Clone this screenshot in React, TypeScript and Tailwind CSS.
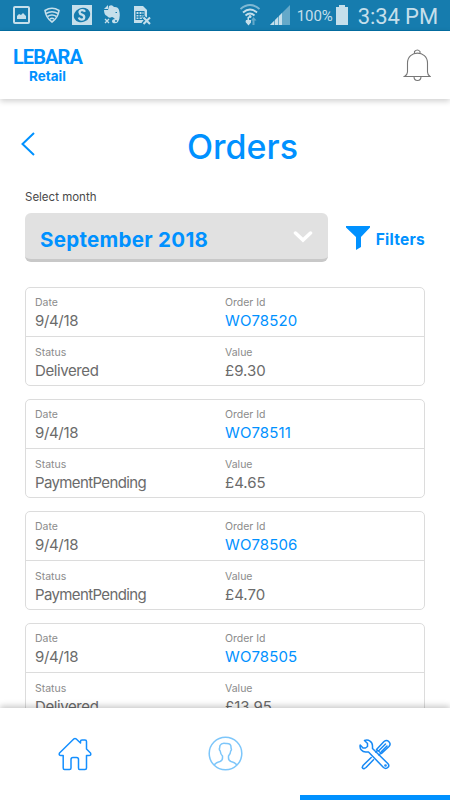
import React from 'react';
import clsx from 'clsx';

interface Order {
  id: string;
  date: string;
  status: string;
  value: string;
}

const orders: Order[] = [
  { id: 'WO78520', date: '9/4/18', status: 'Delivered', value: '£9.30' },
  { id: 'WO78511', date: '9/4/18', status: 'PaymentPending', value: '£4.65' },
  { id: 'WO78506', date: '9/4/18', status: 'PaymentPending', value: '£4.70' },
  { id: 'WO78505', date: '9/4/18', status: 'Delivered', value: '£13.95' },
];

const StatusBar: React.FC = () => (
  <div className="flex h-[31px] shrink-0 items-center border-b border-[#0470a5] bg-[#167cae] pl-[13px] pr-3 font-[Roboto,sans-serif] text-[#c5dfeb]">
    <svg className="h-[18px] w-[17px]" viewBox="0 0 17 18" fill="none">
      <rect x="1" y="1" width="15" height="16" rx="1" stroke="currentColor" strokeWidth="2" />
      <path d="M4 13v-3l2-2 2 1 2-2 3 3v3z" fill="currentColor" />
    </svg>
    <svg className="ml-[14px] h-4 w-4" viewBox="0 0 16 16" fill="none" stroke="currentColor" strokeWidth="1.6">
      <path d="M1 3.5Q8-1 15 3.5Q14 11 8 15Q2 11 1 3.5z" />
      <path d="M2 6.5Q8 3 14 6.5M3.5 9.5Q8 6.5 12.5 9.5M6 12Q8 10.5 10 12" />
    </svg>
    <svg className="ml-3 h-5 w-5" viewBox="0 0 20 20">
      <path d="M0 0h20v20H0z" fill="currentColor" />
      <ellipse cx="10" cy="10" rx="8.4" ry="7" fill="#167cae" transform="rotate(-25 10 10)" />
      <path d="M13 6.8Q12 4.8 9.8 5.2C6.5 5.8 7 8.8 10 9.7C13.4 10.8 12.5 14.5 9.8 14.6Q7.5 14.7 6.8 12.5" fill="none" stroke="currentColor" strokeWidth="2.3" />
    </svg>
    <svg className="ml-3 h-5 w-4" viewBox="0 0 16 20">
      <path d="M5 1Q8-1 10 2Q14 1.5 15 5Q17 12 14 17Q12 19 9 18Q7 16 9 14.5L11 14Q9 12 8 12Q5 14 3 11Q0 10 0 5L4 5z" fill="currentColor" />
      <path d="M0 4l4-4v4z" fill="currentColor" />
      <path d="M11 16h2" stroke="#167cae" strokeWidth="1.3" />
      <path d="M11.5 7.5h1.5" stroke="#167cae" />
      <path d="M1 14l4 4M5 14l-4 4" stroke="currentColor" strokeWidth="1.3" />
    </svg>
    <svg className="ml-[13px] h-5 w-[19px]" viewBox="0 0 19 20" fill="none">
      <path d="M1 1h9l4 4v7l-3 6H1z" fill="currentColor" />
      <path d="M3 6.5h8v8H3zM3 9.5h8M3 12h6M6 6v8M9 6v6" stroke="#167cae" strokeWidth="1.1" />
      <path d="M10 12l7 7M17 12l-7 7" stroke="#167cae" strokeWidth="4" />
      <path d="M10.5 12.5l6.5 6.5M17 12.5l-6.5 6.5" stroke="currentColor" strokeWidth="2.1" />
    </svg>
    <svg className="ml-auto mr-[10px] h-[22px] w-5" viewBox="0 0 20 22" fill="none">
      <path d="M.5 5Q10-3 19.5 5" stroke="currentColor" strokeOpacity=".6" strokeWidth="1.9" />
      <path d="M3 8.5Q10 2.5 17 8.5M5.5 11.5Q10 7.5 14.5 11.5" stroke="currentColor" strokeWidth="1.9" />
      <circle cx="10" cy="12.5" r="1.5" fill="currentColor" />
      <path d="M6 16h1.5v-3H9v3h2v2.5l-2.5 3L5.5 18z" fill="currentColor" />
      <path d="M13.5 13l3 3.5h-2V21h-2v-4.5H11z" fill="currentColor" fillOpacity=".45" />
    </svg>
    <svg className="mr-[7px] h-5 w-5" viewBox="0 0 20 20">
      <path d="M0 20L20 0v20z" fill="currentColor" fillOpacity=".45" />
      <path d="M0 20l4-4v4zM5 15l3-3v8H5zM9 11l3-3v12H9z" fill="currentColor" />
    </svg>
    <span className="w-[36px] whitespace-nowrap pt-[2px] text-[15px] tracking-[-0.1px]">100%</span>
    <svg className="ml-[3px] mr-[10px] h-5 w-3" viewBox="0 0 12 20" fill="currentColor">
      <path d="M3 0h6v2h3v18H0V2h3z" />
    </svg>
    <span className="whitespace-nowrap pt-[3px] text-[22px] leading-[28px] tracking-[-0.1px]">3:34 PM</span>
  </div>
);

const Header: React.FC = () => (
  <header className="relative z-10 flex h-[68px] shrink-0 justify-between bg-white pl-[12px] pr-[19px] shadow-[0_2px_6px_rgba(0,0,0,0.2)]">
    <div className="flex w-[71px] flex-col items-center pt-[16px] text-[#0091ff]">
      <span className="font-[Roboto,sans-serif] text-[20px] font-bold leading-[20px] tracking-[-0.9px]">LEBARA</span>
      <span className="mt-[1px] text-[13.5px] font-bold leading-[16px]">Retail</span>
    </div>
    <svg className="mt-[18px] h-[33px] w-[28px]" viewBox="0 0 28 33" fill="none" stroke="#777" strokeWidth="1.1">
      <path d="M4.500 23V14C4.500 .8 24.500 .8 24.500 14V23Q24.500 25.500 27 27.500H1.500Q4.500 25.500 4.500 23z" />
      <path d="M11.500 4.500V2.500Q14.500-.5 17 2.500V4.500M11 27.500Q11 31.500 14.500 31.500T18 27.500" />
    </svg>
  </header>
);

interface FieldProps {
  label: string;
  value: string;
  className: string;
}

const Field: React.FC<FieldProps> = ({ label, value, className }) => (
  <div>
    <div className="text-[10.5px] leading-[14px] text-[#8b8b8b]">{label}</div>
    <div className={clsx('mt-[1px] text-[15px] leading-5', className)}>{value}</div>
  </div>
);

const OrderCard: React.FC<{ order: Order }> = ({ order }) => (
  <div className="h-[99px] shrink-0 rounded-[5px] border border-[#dcdcdc] bg-white">
    <div className="grid h-[49px] grid-cols-[190px_1fr] border-b border-[#dcdcdc] px-[9px] pt-[8px]">
      <Field label="Date" value={order.date} className="tracking-[-0.35px] text-[#6b6b6b]" />
      <Field label="Order Id" value={order.id} className="tracking-[0.1px] text-[#0091ff]" />
    </div>
    <div className="grid grid-cols-[190px_1fr] px-[9px] pt-[9px]">
      <Field
        label="Status"
        value={order.status}
        className={clsx('text-[#6b6b6b]', order.status === 'Delivered' ? 'tracking-[-0.4px]' : 'tracking-[-0.63px]')}
      />
      <Field label="Value" value={order.value} className="text-[#6b6b6b]" />
    </div>
  </div>
);

const BottomNav: React.FC = () => (
  <nav className="relative z-10 grid h-[92px] shrink-0 grid-cols-3 bg-white shadow-[0_-2px_6px_rgba(0,0,0,0.22)]">
    <div className="flex justify-center pt-[29px]">
      <svg className="h-[34px] w-[34px]" viewBox="0 0 34 34" fill="none" stroke="#148fff" strokeWidth="1.5" strokeLinejoin="round">
        <path d="M1.500 16L16 1.800Q17 1 18 1.800L22.500 6V4.500Q22.500 3 24 3H27Q28.500 3 28.500 4.500V12L32.500 16Q33.500 18.500 31 18.500H28.500V31Q28.500 32.500 27 32.500H21.500Q20.500 32.500 20.500 31V22.500Q20.500 20.500 18.500 20.500H15Q13 20.500 13 22.500V31Q13 32.500 11.500 32.500H6.500Q5.200 32.500 5.200 31V18.500H3Q.5 18.500 1.500 16z" />
      </svg>
    </div>
    <div className="flex justify-center pt-[28px]">
      <svg className="h-[35px] w-[35px]" viewBox="0 0 35 35" fill="none" stroke="#7dc6fa" strokeWidth="1.5">
        <circle cx="17.5" cy="17.5" r="16.3" />
        <path d="M6 29Q8 26.500 12 25.500Q14.500 24.500 14.500 22V20Q12.500 18 12.200 15Q11 14 11.500 12.500L12 9.500Q13.500 6.500 18 7.500Q23.500 7 23 12Q24 14 22.700 15Q22.500 18 20.500 20V22Q20.500 24.500 23 25.500Q27 26.500 29 29" />
      </svg>
    </div>
    <div className="flex justify-center border-b-[5px] border-[#0091ff] pt-[31px]">
      <svg className="h-[31px] w-[32px]" viewBox="0 0 32 31" fill="none" stroke="#1689f5" strokeWidth="1.5" strokeLinejoin="round" strokeLinecap="round">
        <path d="M5.500 1.500L8.500 4.500V7.500L6.500 9H4L1.200 6C.4 9.500 3 13.500 7.500 13H9.500L24.500 28.500C27.500 31 31.500 27.500 28.800 24.500L13.500 9.500V7C13.500 2.500 9.500 .2 5.500 1.500z" />
        <circle cx="26.5" cy="26.5" r=".6" />
        <path d="M17.500 10.500L25 2.500C28.500-.2 33 4 30 7.500L22.500 14.500zM20 11.500L26.500 5M22.500 12.500L28 7M18.500 11.500L16.800 13.100M21.500 14.500L20 16" />
        <path d="M12.200 18.500L4 26.500L3.200 28.500Q3.800 30 5.500 29.500L7 28.500L14.500 20.800" />
      </svg>
    </div>
  </nav>
);

export default function App() {
  return (
    <div className="flex h-[800px] w-[450px] flex-col overflow-hidden bg-white font-[Inter,sans-serif]">
      <StatusBar />
      <Header />

      <main className="flex min-h-0 flex-1 flex-col overflow-hidden px-[25px]">
        <div className="mt-[24px] flex h-[48px] shrink-0 items-center">
          <svg className="-ml-[4px] -mt-[7px] h-[24px] w-[14px]" viewBox="0 0 14 24" fill="none" stroke="#0091ff" strokeWidth="2">
            <path d="M13 1L1.5 12L13 23" />
          </svg>
          <h1 className="flex-1 pl-[25px] text-center text-[34px] font-medium leading-[40px] text-[#0091ff]">
            Orders
          </h1>
        </div>

        <div className="mt-[18px] text-[11.5px] leading-4 text-[#4a4a4a]">Select month</div>
        <div className="mt-[8px] flex h-[49px] shrink-0 items-center">
          <button className="flex h-[49px] w-[303px] items-center justify-between rounded-[6px] border-b-[3px] border-[#c8c8c8] bg-[#e1e1e1] px-[15px] pt-[8px]">
            <span className="text-[20.5px] font-bold leading-7 tracking-[0.3px] text-[#0091ff]">September 2018</span>
            <svg className="-mt-[7px] h-[12px] w-[20px]" viewBox="0 0 20 12" fill="none" stroke="#fff" strokeWidth="3.5" strokeLinecap="round">
              <path d="M2.5 2L10 9L17.5 2" />
            </svg>
          </button>
          <svg className="ml-[18px] h-[24px] w-[24px]" viewBox="0 0 24 24" fill="#0091ff">
            <path d="M0 0h24v1.5L15 11V21L10 24V11L0 1.5z" />
          </svg>
          <span className="ml-[6px] pt-[5px] text-[15.5px] font-bold tracking-[0.25px] text-[#0091ff]">Filters</span>
        </div>

        <div className="mt-[25px] flex flex-col gap-[13px]">
          {orders.map((order) => (
            <OrderCard key={order.id} order={order} />
          ))}
        </div>
      </main>

      <BottomNav />
    </div>
  );
}
